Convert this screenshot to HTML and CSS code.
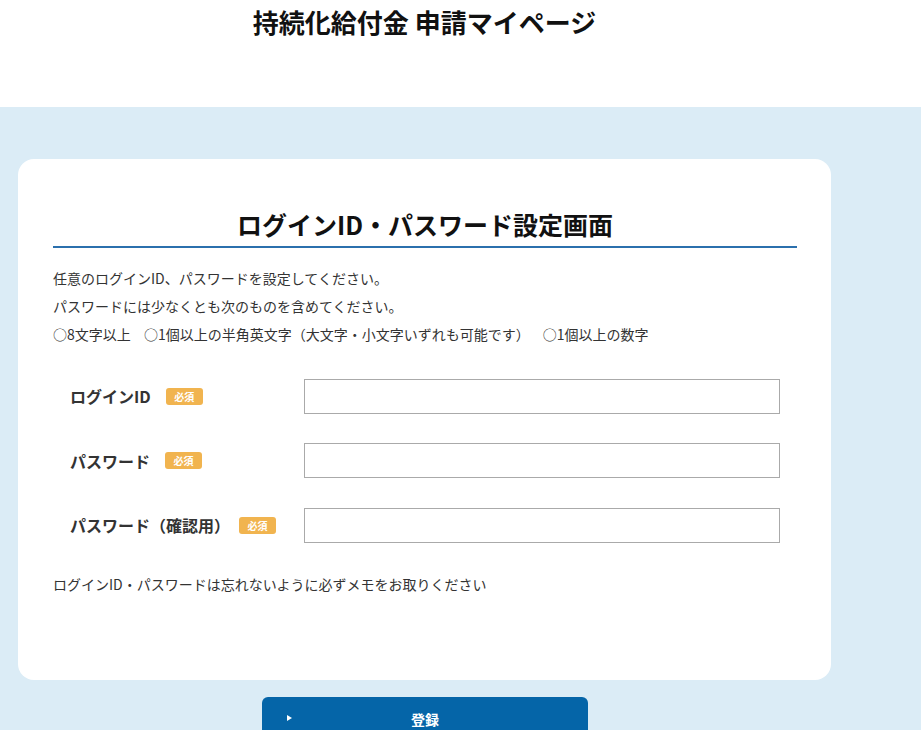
FILE: index.html
```html
<!DOCTYPE html>
<html lang="ja">
<head>
  <meta charset="UTF-8" />
  <meta name="viewport" content="width=device-width, initial-scale=1.0" />
  <title>持続化給付金 申請マイページ</title>
  <link rel="stylesheet" href="styles.css">
</head>
<body>
  <header class="site-header">
    <div class="wrap">
      <h1 class="site-title">持続化給付金 申請マイページ</h1>
    </div>
  </header>

  <main class="main">
    <div class="wrap">
      <div class="card">
        <h2 class="card-title">ログインID・パスワード設定画面</h2>
        <p class="lead">任意のログインID、パスワードを設定してください。</p>
        <p class="lead">パスワードには少なくとも次のものを含めてください。</p>
        <p class="lead rules">
          <span>○8文字以上</span>
          <span>○1個以上の半角英文字（大文字・小文字いずれも可能です）</span>
          <span>○1個以上の数字</span>
        </p>

        <form id="loginForm" class="form">
          <div class="form-row">
            <label class="form-label" for="loginId">ログインID<span class="badge">必須</span></label>
            <input type="text" id="loginId" class="form-input">
          </div>
          <div class="form-row">
            <label class="form-label" for="password">パスワード<span class="badge">必須</span></label>
            <input type="password" id="password" class="form-input">
          </div>
          <div class="form-row">
            <label class="form-label" for="passwordConfirm">パスワード（確認用）<span class="badge">必須</span></label>
            <input type="password" id="passwordConfirm" class="form-input">
          </div>
        </form>

        <p class="note">ログインID・パスワードは忘れないように必ずメモをお取りください</p>
      </div>

      <button type="submit" form="loginForm" class="submit-btn">登録</button>
    </div>
  </main>
</body>
</html>
```

FILE: styles.css
```css
html, body {
  margin: 0;
  padding: 0;
}
body {
  font-family: "Noto Sans CJK JP", "Noto Sans", sans-serif;
  color: #333;
  font-size: 14px;
  background-color: #dbecf6;
}
.wrap {
  width: 849px;
}
.site-header {
  background: white;
  height: 107px;
}
.site-title {
  margin: 0;
  text-align: center;
  font-size: 26px;
  line-height: 44px;
  color: #111;
  font-weight: bold;
}
.main {
  padding-top: 52px;
  height: 571px;
  overflow: hidden;
}
.card {
  background: white;
  margin: 0 18px;
  padding: 47px 34px 82px 35px;
  border-radius: 16px;
}
.card-title {
  margin: 0;
  text-align: center;
  font-size: 25px;
  line-height: 36px;
  padding-bottom: 4px;
  color: #111;
  border-bottom: 2px solid #2b70ad;
}
.lead {
  margin: 0;
  line-height: 28px;
  font-size: 14px;
}
.card-title + .lead {
  margin-top: 16px;
}
.rules span {
  margin-right: 10px;
}
.form {
  margin-top: 31px;
}
.form-row {
  display: flex;
  align-items: center;
  height: 34px;
  margin-bottom: 30.5px;
}
.form-label {
  width: 234px;
  padding-left: 17px;
  font-weight: bold;
  font-size: 16px;
  color: #333;
  display: flex;
  align-items: center;
}
.badge {
  display: inline-block;
  margin-left: 15px;
  width: 37px;
  height: 17px;
  line-height: 17px;
  text-align: center;
  font-size: 10px;
  font-weight: bold;
  color: white;
  background-color: #f1b44f;
  border-radius: 3px;
}
.form-row:last-child .badge {
  margin-left: 9px;
}
.form-input {
  box-sizing: border-box;
  width: 476px;
  height: 35px;
  border: 1px solid #aaa;
  border-radius: 0;
  padding: 4px 8px;
  font-size: 14px;
}
.form-row:last-child {
  margin-bottom: 0;
}
.note {
  margin: 28px 0 0;
  line-height: 28px;
  font-size: 14px;
}
.submit-btn {
  display: block;
  position: relative;
  margin: 17px 0 0 262px;
  width: 326px;
  height: 44px;
  border: none;
  border-radius: 6px;
  background-color: #0565a8;
  color: white;
  font-family: inherit;
  font-size: 14px;
  font-weight: bold;
  cursor: pointer;
}
.submit-btn::before {
  content: "";
  position: absolute;
  left: 25px;
  top: 18px;
  border-left: 5px solid white;
  border-top: 3.5px solid transparent;
  border-bottom: 3.5px solid transparent;
}
```
